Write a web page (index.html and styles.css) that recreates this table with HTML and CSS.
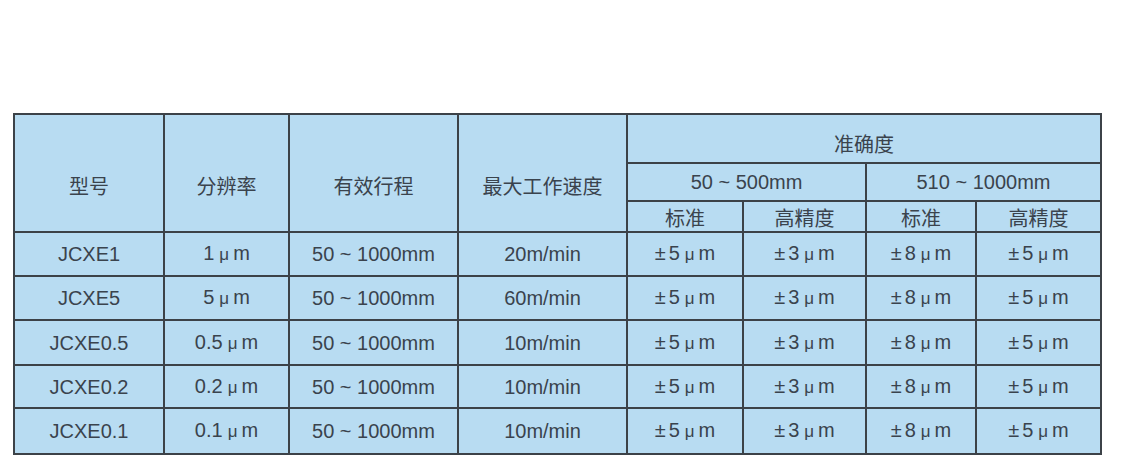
FILE: index.html
```html
<!DOCTYPE html>
<html lang="zh">
<head>
<meta charset="utf-8">
<title>JCXE 规格</title>
<link rel="stylesheet" href="styles.css">
</head>
<body>
<div class="page">
<table class="spec">
<colgroup>
<col class="c1"><col class="c2"><col class="c3"><col class="c4">
<col class="c5"><col class="c6"><col class="c7"><col class="c8">
</colgroup>
<thead>
<tr class="h1">
<th rowspan="3" class="low">型号</th>
<th rowspan="3" class="low">分辨率</th>
<th rowspan="3" class="low">有效行程</th>
<th rowspan="3" class="low">最大工作速度</th>
<th colspan="4" class="top">准确度</th>
</tr>
<tr class="h2">
<th colspan="2">50 ~ 500mm</th>
<th colspan="2">510 ~ 1000mm</th>
</tr>
<tr class="h3">
<th class="sub">标准</th>
<th class="sub">高精度</th>
<th class="sub">标准</th>
<th class="sub">高精度</th>
</tr>
</thead>
<tbody>
<tr class="r1">
<td>JCXE1</td><td>1<span class="u">μ</span>m</td><td>50 ~ 1000mm</td><td>20m/min</td>
<td><span class="pm">±</span>5<span class="u">μ</span>m</td><td><span class="pm">±</span>3<span class="u">μ</span>m</td><td><span class="pm">±</span>8<span class="u">μ</span>m</td><td><span class="pm">±</span>5<span class="u">μ</span>m</td>
</tr>
<tr class="r2">
<td>JCXE5</td><td>5<span class="u">μ</span>m</td><td>50 ~ 1000mm</td><td>60m/min</td>
<td><span class="pm">±</span>5<span class="u">μ</span>m</td><td><span class="pm">±</span>3<span class="u">μ</span>m</td><td><span class="pm">±</span>8<span class="u">μ</span>m</td><td><span class="pm">±</span>5<span class="u">μ</span>m</td>
</tr>
<tr class="r3">
<td>JCXE0.5</td><td>0.5<span class="u">μ</span>m</td><td>50 ~ 1000mm</td><td>10m/min</td>
<td><span class="pm">±</span>5<span class="u">μ</span>m</td><td><span class="pm">±</span>3<span class="u">μ</span>m</td><td><span class="pm">±</span>8<span class="u">μ</span>m</td><td><span class="pm">±</span>5<span class="u">μ</span>m</td>
</tr>
<tr class="r4">
<td>JCXE0.2</td><td>0.2<span class="u">μ</span>m</td><td>50 ~ 1000mm</td><td>10m/min</td>
<td><span class="pm">±</span>5<span class="u">μ</span>m</td><td><span class="pm">±</span>3<span class="u">μ</span>m</td><td><span class="pm">±</span>8<span class="u">μ</span>m</td><td><span class="pm">±</span>5<span class="u">μ</span>m</td>
</tr>
<tr class="r5">
<td>JCXE0.1</td><td>0.1<span class="u">μ</span>m</td><td>50 ~ 1000mm</td><td>10m/min</td>
<td><span class="pm">±</span>5<span class="u">μ</span>m</td><td><span class="pm">±</span>3<span class="u">μ</span>m</td><td><span class="pm">±</span>8<span class="u">μ</span>m</td><td><span class="pm">±</span>5<span class="u">μ</span>m</td>
</tr>
</tbody>
</table>
</div>
</body>
</html>
```

FILE: styles.css
```css
html, body {
  margin: 0;
  padding: 0;
  background: #ffffff;
}

.page {
  padding: 113px 0 0 13px;
}

.spec {
  border-collapse: collapse;
  table-layout: fixed;
  width: 1089px;
  background: #b8dcf2;
  font-family: "Liberation Sans", "Noto Sans CJK SC", sans-serif;
  font-size: 20px;
  color: #3a434d;
}

.c1 { width: 150px; }
.c2 { width: 125px; }
.c3 { width: 169px; }
.c4 { width: 169px; }
.c5 { width: 116px; }
.c6 { width: 123px; }
.c7 { width: 110px; }
.c8 { width: 125px; }

.spec th,
.spec td {
  border: 2px solid #3c4248;
  padding: 0;
  text-align: center;
  vertical-align: middle;
  font-weight: normal;
  line-height: 22px;
  white-space: nowrap;
}

.spec th.low {
  padding-top: 28px;
}

.spec th.top {
  padding-top: 12px;
}

.spec th.sub {
  padding-top: 4px;
}

.h1 { height: 49px; }
.h2 { height: 38px; }
.h3 { height: 31px; }

.r1 { height: 44px; }
.r2 { height: 44px; }
.r3 { height: 45px; }
.r4 { height: 43px; }
.r5 { height: 46px; }

.u {
  margin: 0 4px 0 5px;
  font-size: 17px;
}

.pm {
  margin-right: 3px;
}
```
